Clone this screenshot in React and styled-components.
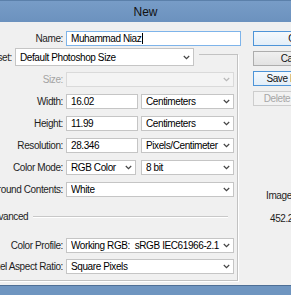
import styled, { createGlobalStyle } from "styled-components";

const GlobalStyle = createGlobalStyle`
  html, body {
    margin: 0;
    padding: 0;
    background: #f0f0f0;
    overflow: hidden;
  }
  body {
    width: 291px;
    height: 295px;
    font-family: "Liberation Sans", Arial, sans-serif;
    font-size: 10px;
    letter-spacing: -0.4px;
    color: #1e1e1e;
  }
`;

const Window = styled.div`
  width: 291px;
  height: 295px;
  display: flex;
  flex-direction: column;
  overflow: hidden;
  background: #f0f0f0;
`;

const TitleBar = styled.div`
  height: 21px;
  flex: none;
  border-top: 1px solid #5b80aa;
  background: linear-gradient(#779cc7, #6c92be);
  display: flex;
  align-items: center;
  justify-content: center;
  font: 12px "Liberation Sans", Arial, sans-serif;
  letter-spacing: 0;
  color: #111;
`;

const Body = styled.div`
  flex: 1;
  display: flex;
  padding-top: 9px;
  overflow: hidden;
`;

const FrameBottom = styled.div`
  height: 9px;
  flex: none;
  border-top: 1px solid #4e6f96;
  background: #6f95c0;
`;

const LeftColumn = styled.div`
  flex: none;
  width: 281px;
  margin-left: -40px;
  display: flex;
  flex-direction: column;
`;

const Row = styled.div`
  display: flex;
  align-items: center;
  height: 15px;
  flex: none;
  margin-top: ${(p) => p.$top || 0}px;
`;

const Label = styled.span`
  flex: none;
  width: ${(p) => p.$w}px;
  display: flex;
  justify-content: flex-end;
  white-space: nowrap;
  margin-right: 3px;
  color: ${(p) => (p.$disabled ? "#a3a3a3" : "#1e1e1e")};
`;

const Field = styled.div`
  flex: none;
  box-sizing: border-box;
  width: ${(p) => p.$w}px;
  height: ${(p) => p.$h || 15}px;
  margin-left: ${(p) => p.$gap || 0}px;
  border: 1px solid ${(p) => (p.$focus ? "#7eb4ea" : p.$disabled ? "#dadada" : "#c5c5c5")};
  background: ${(p) => (p.$disabled ? "#f4f4f4" : "#fff")};
  padding: 0 3px 0 4px;
  display: flex;
  align-items: center;
  white-space: nowrap;
  overflow: hidden;
  color: #000;
`;

const Value = styled.span`
  flex: 1;
  overflow: hidden;
`;

const Caret = styled.span`
  width: 1px;
  height: 11px;
  background: #000;
  margin-left: 1px;
`;

const GroupBox = styled.div`
  margin-top: 8px;
  width: 278px;
  box-sizing: border-box;
  border: 1px solid #c2c2c2;
  box-shadow: 1px 1px 0 #fff;
  padding-bottom: 6px;
  display: flex;
  flex-direction: column;
`;

const PresetRow = styled.div`
  display: flex;
  align-items: center;
  width: fit-content;
  height: 18px;
  margin-top: -7px;
  padding-right: 5px;
  background: #f0f0f0;
`;

const AdvancedRow = styled.div`
  display: flex;
  align-items: center;
  height: 13px;
  margin-top: 13px;
  padding-left: 6px;
  padding-right: 9px;
`;

const Toggle = styled.div`
  width: 14px;
  height: 14px;
  box-sizing: border-box;
  border: 1px solid #b5b5b5;
  border-radius: 50%;
  background: linear-gradient(#fdfdfd, #e4e4e4);
  display: flex;
  align-items: center;
  justify-content: center;
  margin-right: 6px;
`;

const Rule = styled.div`
  flex: 1;
  height: 0;
  margin-left: 5px;
  border-top: 1px solid #c8c8c8;
  box-shadow: 0 1px 0 #fff;
`;

const RightColumn = styled.div`
  flex: none;
  width: 84px;
  margin-left: 12px;
  display: flex;
  flex-direction: column;
  gap: 5px;
`;

const Button = styled.div`
  height: 15px;
  box-sizing: border-box;
  display: flex;
  align-items: center;
  justify-content: center;
  white-space: nowrap;
  border: 1px solid ${(p) => (p.$primary ? "#4d94d8" : p.$disabled ? "#cdcdcd" : "#adadad")};
  background: ${(p) =>
    p.$primary
      ? "linear-gradient(#f4f9fd, #e3eef8)"
      : p.$disabled
      ? "#f2f2f2"
      : "linear-gradient(#f0f0f0, #e2e2e2)"};
  color: ${(p) => (p.$disabled ? "#a6a6a6" : "#111")};
`;

const Info = styled.div`
  margin-top: ${(p) => p.$top}px;
  padding-left: ${(p) => p.$left}px;
  line-height: 13px;
  white-space: nowrap;
  color: #1e1e1e;
`;

const Chevron = ({ disabled }) => (
  <svg width="7" height="5" viewBox="0 0 7 5" style={{ flex: "none" }}>
    <path d="M0.8 1 L3.5 3.7 L6.2 1" fill="none" stroke={disabled ? "#b8b8b8" : "#444"} strokeWidth="1.2" />
  </svg>
);

const Select = ({ w, h, gap, disabled, children }) => (
  <Field $w={w} $h={h} $gap={gap} $disabled={disabled}>
    <Value>{children}</Value>
    <Chevron disabled={disabled} />
  </Field>
);

const LABEL_W = 102;

export default function App() {
  return (
    <Window>
      <GlobalStyle />
      <TitleBar>New</TitleBar>
      <Body>
        <LeftColumn>
          <Row>
            <Label $w={103}>Name:</Label>
            <Field $w={175} $focus>
              <span>Muhammad Niaz</span>
              <Caret />
            </Field>
          </Row>
          <GroupBox>
            <PresetRow>
              <Label $w={51}>Preset:</Label>
              <Select w={179} h={18}>Default Photoshop Size</Select>
            </PresetRow>
            <Row $top={6}>
              <Label $w={LABEL_W} $disabled>Size:</Label>
              <Select w={168} disabled />
            </Row>
            <Row $top={7}>
              <Label $w={LABEL_W}>Width:</Label>
              <Field $w={72}>16.02</Field>
              <Select w={93} gap={3}>Centimeters</Select>
            </Row>
            <Row $top={7}>
              <Label $w={LABEL_W}>Height:</Label>
              <Field $w={72}>11.99</Field>
              <Select w={93} gap={3}>Centimeters</Select>
            </Row>
            <Row $top={7}>
              <Label $w={LABEL_W}>Resolution:</Label>
              <Field $w={72}>28.346</Field>
              <Select w={93} gap={3}>Pixels/Centimeter</Select>
            </Row>
            <Row $top={7}>
              <Label $w={LABEL_W}>Color Mode:</Label>
              <Select w={70}>RGB Color</Select>
              <Select w={93} gap={5}>8 bit</Select>
            </Row>
            <Row $top={7}>
              <Label $w={LABEL_W}>Background Contents:</Label>
              <Select w={168}>White</Select>
            </Row>
            <AdvancedRow>
              <Toggle>
                <svg width="7" height="5" viewBox="0 0 7 5">
                  <path d="M0.8 4 L3.5 1.3 L6.2 4" fill="none" stroke="#444" strokeWidth="1.2" />
                </svg>
              </Toggle>
              <span>Advanced</span>
              <Rule />
            </AdvancedRow>
            <Row $top={15}>
              <Label $w={LABEL_W}>Color Profile:</Label>
              <Select w={168}>Working RGB:&nbsp; sRGB IEC61966-2.1</Select>
            </Row>
            <Row $top={6}>
              <Label $w={LABEL_W}>Pixel Aspect Ratio:</Label>
              <Select w={168}>Square Pixels</Select>
            </Row>
          </GroupBox>
        </LeftColumn>
        <RightColumn>
          <Button $primary>OK</Button>
          <Button>Cancel</Button>
          <Button $primary>Save Preset...</Button>
          <Button $disabled>Delete Preset...</Button>
          <Info $top={78} $left={13}>Image Size:</Info>
          <Info $top={5} $left={17}>452.2K</Info>
        </RightColumn>
      </Body>
      <FrameBottom />
    </Window>
  );
}
